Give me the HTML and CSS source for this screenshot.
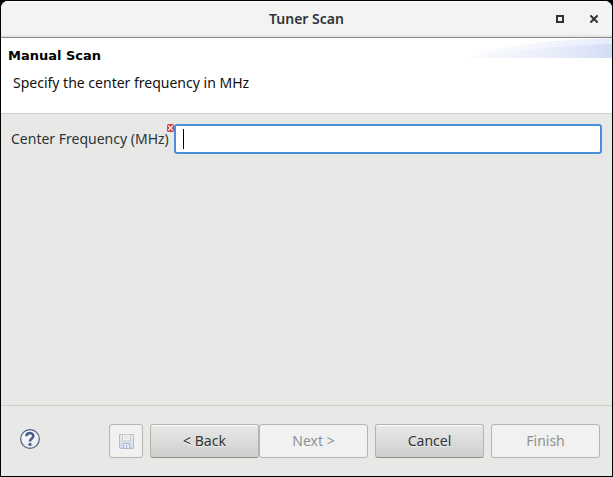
FILE: index.html
```html
<!DOCTYPE html>
<html lang="en">
<head>
<meta charset="utf-8">
<title>Tuner Scan</title>
<link rel="stylesheet" href="styles.css">
</head>
<body>
<main class="window">
  <header class="titlebar">
    <h1 class="title">Tuner Scan</h1>
    <div class="controls">
      <button class="control" type="button" aria-label="Maximize">
        <svg width="8" height="8" viewBox="0 0 8 8"><path d="M1 1h6v6H1z" fill="none" stroke="#2e3436" stroke-width="2"/></svg>
      </button>
      <button class="control" type="button" aria-label="Close">
        <svg width="8" height="8" viewBox="0 0 8 8"><path d="M.4.4l7.200 7.200M7.600.4L.4 7.600" stroke="#2e3436" stroke-width="2"/></svg>
      </button>
    </div>
  </header>
  <section class="banner">
    <svg class="swoosh" width="141" height="20" viewBox="0 0 141 20" aria-hidden="true">
      <defs>
        <linearGradient id="wash" x1="0" x2="1" y1="0" y2="0">
          <stop offset="0" stop-color="#fafbfe"/>
          <stop offset=".5" stop-color="#f4f6fc"/>
          <stop offset="1" stop-color="#e6ecfa"/>
        </linearGradient>
        <linearGradient id="tint" x1="0" x2="1" y1="0" y2="0">
          <stop offset="0" stop-color="#f9fafd"/>
          <stop offset=".5" stop-color="#ebeffa"/>
          <stop offset=".8" stop-color="#dfe6f8"/>
          <stop offset="1" stop-color="#d1dbf4"/>
        </linearGradient>
      </defs>
      <path d="M0 20C18 10 70 2 141 0V20z" fill="url(#wash)"/>
      <path d="M0 20C40 14 84 7 141 6V20z" fill="url(#tint)"/>
    </svg>
    <h2 class="heading">Manual Scan</h2>
    <p class="message">Specify the center frequency in MHz</p>
  </section>
  <form class="wizard">
    <div class="page">
      <label class="label" for="frequency">Center Frequency (MHz)</label>
      <div class="field">
        <input class="entry" id="frequency" type="text" autocomplete="off">
        <span class="caret"></span>
        <svg class="error" width="7" height="8" viewBox="0 0 7 8" aria-hidden="true"><rect width="7" height="8" rx="1.5" fill="#dc4450"/><path d="M1.300 1.600l4.400 4.800M5.700 1.600L1.300 6.400" stroke="#fff" stroke-width="1.2"/></svg>
      </div>
    </div>
    <footer class="actions">
      <button class="help" type="button" aria-label="Help">
        <svg width="20" height="20" viewBox="0 0 20 20"><defs><linearGradient id="disc" x1="0" x2="0" y1="0" y2="1"><stop offset="0" stop-color="#fff"/><stop offset="1" stop-color="#e6e8ec"/></linearGradient></defs><circle cx="10" cy="10" r="9.3" fill="url(#disc)" stroke="#4b6088" stroke-width="1.2"/><path d="M6.400 7.200C6.400 3.200 13.300 3.100 13.300 6.900C13.300 9.600 10 9.300 10 12.600" fill="none" stroke="#4b6088" stroke-width="2.600"/><circle cx="10" cy="15.400" r="1.600" fill="#4b6088"/></svg>
      </button>
      <button class="button save" type="button" aria-label="Save" disabled>
        <svg width="15" height="15" viewBox="0 0 15 15"><defs><linearGradient id="disk" x1="0" x2="0" y1="0" y2="1"><stop offset="0" stop-color="#eceff0"/><stop offset="1" stop-color="#cbd9ed"/></linearGradient></defs><path d="M.5.5h14v14H1.5l-1-1z" fill="url(#disk)" stroke="#b3bfd3"/><path d="M3.5.5h8v6.5h-8z" fill="#f5f6f1" stroke="#c3cac8"/><path d="M5 2.5h5M5 4.5h5" stroke="#d9dcd2"/><path d="M4.500 14.500v-5h6v5z" fill="#e6ecf5" stroke="#a9b8d0"/><path d="M7.500 11v3.500" stroke="#a9b8d0"/></svg>
      </button>
      <div class="steps">
        <button class="button" type="button">&lt; Back</button>
        <button class="button" type="button" disabled>Next &gt;</button>
      </div>
      <button class="button" type="button">Cancel</button>
      <button class="button" type="submit" disabled>Finish</button>
    </footer>
  </form>
</main>
</body>
</html>
```

FILE: styles.css
```css
* {
  box-sizing: border-box;
}

body {
  margin: 0;
  background: #000;
  color: #2e3436;
  font: 14px/20px "Noto Sans", "Open Sans", sans-serif;
}

h1,
h2,
p {
  margin: 0;
}

svg {
  display: block;
}

.window {
  display: flex;
  flex-direction: column;
  min-height: 100vh;
  overflow: hidden;
  border: 1px solid #000;
  border-radius: 8px 8px 0 0;
  background: #e8e8e6;
}

.titlebar {
  display: grid;
  grid-template-columns: 1fr auto 1fr;
  align-items: center;
  height: 37px;
  border-bottom: 1px solid #8b8b89;
  background: linear-gradient(#fff 0, #f3f3f3 2px, #f3f3f3 33px, #dededc 36px);
}

.title {
  grid-column: 2;
  font-size: 14px;
  font-weight: 600;
}

.controls {
  display: flex;
  justify-content: flex-end;
  gap: 10px;
  padding-right: 6px;
}

.control,
.help {
  padding: 0;
  border: 0;
  background: none;
}

.control {
  display: grid;
  place-items: center;
  width: 24px;
  height: 24px;
}

.banner {
  position: relative;
  padding: 8px 7px 20px;
  border-bottom: 1px solid #cececb;
  background: #fff;
  color: #111;
}

.swoosh {
  position: absolute;
  top: 0;
  right: 0;
}

.heading {
  position: relative;
  font: bold 13px/20px "DejaVu Sans", sans-serif;
  color: #000;
}

.message {
  padding: 7px 5px 0;
}

.wizard {
  display: flex;
  flex: 1;
  flex-direction: column;
}

.page {
  display: flex;
  flex: 1;
  align-items: flex-start;
  gap: 5px;
  padding: 10px;
}

.label {
  line-height: 30px;
}

.field {
  position: relative;
  flex: 1;
}

.entry {
  display: block;
  width: 100%;
  height: 30px;
  padding: 0 8px;
  border: 2px solid #4a90d9;
  border-radius: 3px;
  outline: 0;
  background: #fff;
  color: #2e3436;
  font: inherit;
}

.caret {
  position: absolute;
  top: 5px;
  left: 9px;
  width: 1px;
  height: 20px;
  background: #000;
}

.error {
  position: absolute;
  top: 0;
  left: -7px;
}

.actions {
  display: flex;
  align-items: center;
  gap: 7px;
  padding: 18px 12px 18px 19px;
  border-top: 1px solid #cececb;
}

.help {
  margin-right: auto;
  padding-bottom: 4px;
}

.steps {
  display: flex;
}

.button {
  width: 109px;
  height: 34px;
  padding: 0;
  border: 1px solid #b2b2ae;
  border-bottom-color: #8f8f8b;
  border-radius: 3px;
  background: linear-gradient(#e8e8e7, #cfcfcd);
  box-shadow: inset 0 1px #fff;
  color: #2e3436;
  font: inherit;
  text-shadow: 0 1px #f0f0ef;
}

.button:disabled {
  border-color: #b4b4b0;
  background: #f1f1f1;
  box-shadow: none;
  color: #8f9191;
  text-shadow: none;
}

.save {
  display: grid;
  place-items: center;
  width: 34px;
}
```
